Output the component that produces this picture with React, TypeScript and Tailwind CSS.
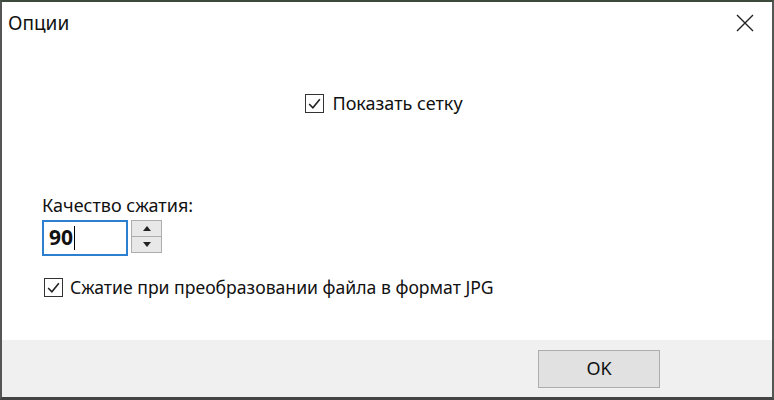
import React from "react";

function Check() {
  return (
    <span className="inline-flex h-[19px] w-[19px] items-center justify-center border border-[#333] bg-white">
      <svg width="15" height="15" viewBox="0 0 14 14" fill="none">
        <path d="M2 7.5 L5.5 11 L12 3" stroke="#222" strokeWidth="1.5" />
      </svg>
    </span>
  );
}

export default function App() {
  return (
    <div
      className="flex h-[400px] w-[774px] flex-col border-x-2 border-t-2 border-b-[3px] border-x-[#555] border-t-[#3b4a3b] border-b-[#444] bg-white text-[#111]"
      style={{ fontFamily: '"Noto Sans", "Open Sans", sans-serif' }}
    >
      <div className="flex h-[42px] items-center justify-between pl-[6px] pr-[18px]">
        <span className="text-[19px]">Опции</span>
        <svg width="18" height="18" viewBox="0 0 18 18" fill="none">
          <path d="M1 1 L17 17 M17 1 L1 17" stroke="#222" strokeWidth="1.4" />
        </svg>
      </div>
      <div className="flex flex-1 flex-col">
        <div className="mt-[46px] flex items-center justify-center gap-[8px] pr-[6px]">
          <Check />
          <span className="text-[18px]">Показать сетку</span>
        </div>
        <div className="mt-[78px] pl-[40px] text-[18px] leading-[20px]">Качество сжатия:</div>
        <div className="mt-[5px] flex items-start gap-[3px] pl-[40px]">
          <div className="flex h-[36px] w-[86px] items-center border-2 border-[#2d7fd0] pl-[5px]">
            <span className="text-[21px] font-bold">90</span>
            <span className="ml-[1px] h-[24px] w-[1px] bg-black" />
          </div>
          <div className="flex h-[33px] w-[31px] flex-col border border-[#adadad] bg-[#e8e8e8]">
            <div className="flex flex-1 items-center justify-center border-b border-[#adadad]">
              <svg width="8" height="5" viewBox="0 0 8 5"><path d="M0 5 L4 0 L8 5Z" fill="#222" /></svg>
            </div>
            <div className="flex flex-1 items-center justify-center">
              <svg width="8" height="5" viewBox="0 0 8 5"><path d="M0 0 L4 5 L8 0Z" fill="#222" /></svg>
            </div>
          </div>
        </div>
        <div className="mt-[18px] flex items-center gap-[7px] pl-[42px]">
          <Check />
          <span className="text-[17.6px]">Сжатие при преобразовании файла в формат JPG</span>
        </div>
      </div>
      <div className="flex h-[57px] items-center justify-end bg-[#f0f0f0] pr-[112px]">
        <div className="flex h-[38px] w-[122px] items-center justify-center border border-[#adadad] bg-[#e1e1e1] text-[18px]">
          OK
        </div>
      </div>
    </div>
  );
}
